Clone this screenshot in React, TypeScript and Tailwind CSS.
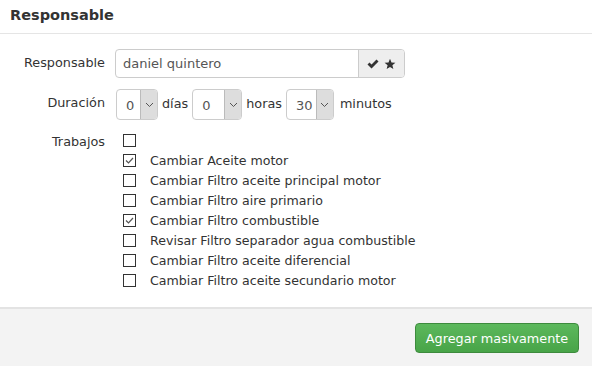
import React from "react";

const items: [string, boolean][] = [
  ["", false],
  ["Cambiar Aceite motor", true],
  ["Cambiar Filtro aceite principal motor", false],
  ["Cambiar Filtro aire primario", false],
  ["Cambiar Filtro combustible", true],
  ["Revisar Filtro separador agua combustible", false],
  ["Cambiar Filtro aceite diferencial", false],
  ["Cambiar Filtro aceite secundario motor", false],
];

function Box({ checked }: { checked: boolean }) {
  return (
    <span className="w-[13px] h-[13px] border border-[#333] bg-white flex items-center justify-center">
      {checked && (
        <svg width="11" height="11" viewBox="0 0 11 11">
          <path d="M2 5.5 L4.5 8 L9 3" fill="none" stroke="#555" strokeWidth="1.2" />
        </svg>
      )}
    </span>
  );
}

function Sel({ v, w }: { v: string; w: string }) {
  return (
    <div className={`flex h-[31px] border border-[#ccc] rounded-[4px] bg-white overflow-hidden ${w}`}>
      <div className="flex-1 flex items-center pl-[9px] text-[13px] text-[#555] pt-[2px]">{v}</div>
      <div className="w-[17px] bg-[#ddd] border-l border-[#bbb] flex items-center justify-center">
        <svg width="9" height="6" viewBox="0 0 9 6">
          <path d="M1 1 L4.5 4.5 L8 1" fill="none" stroke="#555" strokeWidth="1" />
        </svg>
      </div>
    </div>
  );
}

export default function App() {
  return (
    <div className="w-[592px] h-[366px] bg-white flex flex-col text-[#333]" style={{ fontFamily: '"DejaVu Sans", Verdana, sans-serif' }}>
      <div className="h-[34px] border-b border-[#e5e5e5] pl-[10px] flex items-start pt-[5px]">
        <span className="font-bold text-[14.5px] text-[#333]">Responsable</span>
      </div>
      <div className="flex-1 pt-[15px]">
        <div className="flex items-start">
          <div className="w-[105px] text-right text-[12.8px] pt-[4px]">Responsable</div>
          <div className="ml-[10px] flex h-[29px] w-[290px] border border-[#ccc] rounded-[4px] overflow-hidden">
            <div className="flex-1 flex items-center pl-[7px] text-[13px] text-[#555]">daniel quintero</div>
            <div className="w-[46px] bg-[#eee] border-l border-[#ccc] flex items-center justify-center gap-[5px]">
              <svg width="12" height="10" viewBox="0 0 12 10">
                <path d="M0.5 5.5 L2.5 3.5 L4.5 5.5 L9.5 0.5 L11.5 2.5 L4.5 9.5 Z" fill="#333" />
              </svg>
              <svg width="12" height="12" viewBox="0 0 24 24">
                <path d="M12 1.5 L15 8.8 L22.8 9.3 L16.8 14.3 L18.7 22 L12 17.8 L5.3 22 L7.2 14.3 L1.2 9.3 L9 8.8 Z" fill="#333" />
              </svg>
            </div>
          </div>
        </div>
        <div className="flex items-start mt-[11px]">
          <div className="w-[105px] text-right text-[12.8px] pt-[4px]">Duración</div>
          <div className="ml-[11px] flex items-start">
            <Sel v="0" w="w-[42px]" />
            <span className="text-[12.8px] mx-[4px] pt-[5px]">días</span>
            <Sel v="0" w="w-[50px]" />
            <span className="text-[12.8px] mx-[4px] pt-[5px]">horas</span>
            <Sel v="30" w="w-[48px]" />
            <span className="text-[12.8px] ml-[6px] pt-[5px]">minutos</span>
          </div>
        </div>
        <div className="flex items-start mt-[10px]">
          <div className="w-[105px] text-right text-[12.8px] pt-[2px]">Trabajos</div>
          <div className="ml-[18px] flex flex-col">
            {items.map(([t, c], i) => (
              <div key={i} className="h-[20px] flex items-center">
                <Box checked={c} />
                <span className="ml-[14px] text-[12.6px] pt-[2px]">{t}</span>
              </div>
            ))}
          </div>
        </div>
      </div>
      <div className="h-[59px] border-t-2 border-[#e3e3e3] bg-[#f3f3f3] flex items-start justify-end pr-[13px] pt-[14px]">
        <button className="h-[30px] w-[164px] rounded-[4px] border border-[#3d8b3d] bg-[linear-gradient(#5cb85c,#48a448)] text-white text-[12.8px] pt-[1px]">
          Agregar masivamente
        </button>
      </div>
    </div>
  );
}
